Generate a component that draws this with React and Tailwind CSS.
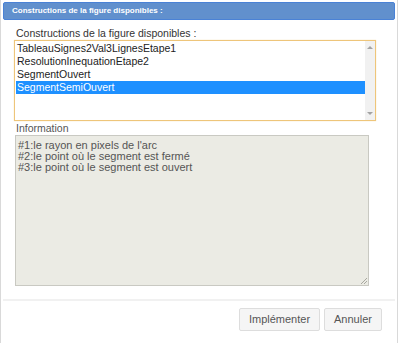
import React from "react";

const items = [
  "TableauSignes2Val3LignesEtape1",
  "ResolutionInequationEtape2",
  "SegmentOuvert",
  "SegmentSemiOuvert",
];

const info = [
  "#1:le rayon en pixels de l'arc",
  "#2:le point où le segment est fermé",
  "#3:le point où le segment est ouvert",
];

export default function App() {
  return (
    <div
      className="w-[398px] h-[343px] bg-white border-x border-[#d9d9d9] flex flex-col"
      style={{ fontFamily: "'Liberation Sans', Arial, sans-serif" }}
    >
      {/* title bar */}
      <div className="mx-[2px] mt-[2px] h-[18px] bg-[#6190cd] border border-[#4a82d6] rounded-[2px] flex items-center pl-[8px]">
        <span className="text-white font-bold text-[8px]">Constructions de la figure disponibles :</span>
      </div>

      <div className="pl-[13px] pr-[21px] flex flex-col">
        <div className="text-[10.5px] text-[#333] leading-[12px] pl-[2px] mt-[7px]">
          Constructions de la figure disponibles :
        </div>

        {/* list box */}
        <div className="mt-[1px] h-[81px] border border-[#eec57a] shadow-[0_0_1px_#f3d9a6] flex">
          <div className="flex-1 pt-[1px] pl-[1px]">
            {items.map((it, i) => (
              <div
                key={it}
                className={
                  "h-[13px] leading-[13px] text-[10.5px] pl-[1px] " +
                  (i === 3 ? "bg-[#1e90ff] text-white" : "text-[#222]")
                }
              >
                {it}
              </div>
            ))}
          </div>
          <div className="w-[10px] bg-[#f1f1f1] flex flex-col justify-between items-center py-[4px]">
            <svg width="6" height="4" viewBox="0 0 6 4">
              <path d="M0 4 L3 1 L6 4 Z" fill="#a3a3a3" />
            </svg>
            <svg width="6" height="4" viewBox="0 0 6 4">
              <path d="M0 0 L6 0 L3 3 Z" fill="#a3a3a3" />
            </svg>
          </div>
        </div>

        <div className="text-[10.5px] text-[#555] leading-[12px] pl-[2px] mt-[1px]">Information</div>

        {/* disabled textarea */}
        <div className="relative mt-[1px] ml-[1px] mr-[7px] h-[151px] bg-[#ebebe4] border border-[#c9c9c2] px-[2px] pt-[4px]">
          {info.map((l) => (
            <div key={l} className="text-[11px] leading-[11px] text-[#555]">
              {l}
            </div>
          ))}
          <svg className="absolute right-[1px] bottom-[1px]" width="7" height="7" viewBox="0 0 7 7">
            <path d="M1 7 L7 1 M4 7 L7 4" stroke="#a8a8a0" strokeWidth="1" />
          </svg>
        </div>
      </div>

      <div className="mx-[2px] mt-[13px] h-[2px] bg-[#f1f1f1]" />

      {/* buttons */}
      <div className="flex justify-end gap-[4px] pr-[15px] mt-[7px]">
        <button className="h-[23px] w-[81px] bg-[#f5f5f5] border border-[#dddddd] rounded-[2px] text-[11px] text-[#555]">
          Implémenter
        </button>
        <button className="h-[23px] w-[58px] bg-[#f5f5f5] border border-[#dddddd] rounded-[2px] text-[11px] text-[#555]">
          Annuler
        </button>
      </div>
    </div>
  );
}
